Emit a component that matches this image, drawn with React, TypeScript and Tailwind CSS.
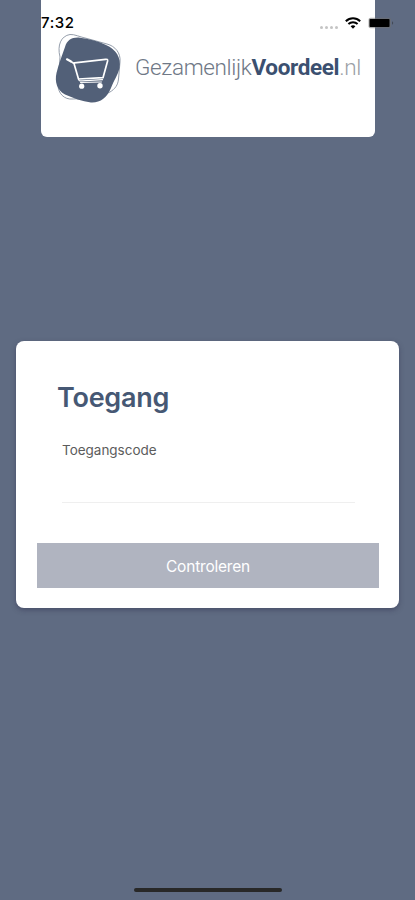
import { useState } from "react";

function StatusBar() {
    return (
        <div className="absolute inset-x-0 top-0 z-10 flex h-11 items-start justify-between pl-[41px] pr-[21px] pt-[14px] text-black">
            <span className="font-['Inter'] text-[15px] font-medium leading-[18px] tracking-[0.6px]">7:32</span>
            <div className="flex items-center pt-[3px]">
                <div className="mr-[7px] mt-[8px] flex gap-[2px]">
                    <span className="size-[3px] rounded-full bg-[#c4c4c4]" />
                    <span className="size-[3px] rounded-full bg-[#c4c4c4]" />
                    <span className="size-[3px] rounded-full bg-[#c4c4c4]" />
                    <span className="size-[3px] rounded-full bg-[#c4c4c4]" />
                </div>
                <svg width="16" height="12" viewBox="0 0 16 12" fill="none" stroke="currentColor" strokeWidth="2">
                    <path d="M0.8 4.2C5 0.2 11 0.2 15.2 4.2" />
                    <path d="M3.4 7.1C6 4.7 10 4.7 12.6 7.1" />
                    <path d="M5.6 9.2C7 8 9 8 10.4 9.2L8 11.7Z" fill="currentColor" stroke="none" />
                </svg>
                <svg className="ml-[7px]" width="26" height="12" viewBox="0 0 26 12">
                    <rect x="0.5" y="0.7" width="22.5" height="10.6" rx="2" fill="#707070" fillOpacity="0.55" />
                    <rect x="1.5" y="2" width="20" height="8" rx="0.8" fill="#000" />
                    <path d="M24 4.2C25.6 4.8 25.6 7.2 24 7.8Z" fill="#444b58" />
                </svg>
            </div>
        </div>
    );
}

function CartLogo() {
    return (
        <svg className="shrink-0" width="70" height="72" viewBox="0 0 70 72" fill="none">
            <path
                d="M7 24C4 12 8 3 17 1.5C21 1 27 4 34 5.5L54 11C62 13 68 20 67 29L65.5 46C65 52 62 56 57 59L42 66C35 68 29 65 20 66C11 67 5 60 5 52Z"
                stroke="#8993a1"
                strokeWidth="0.9"
            />
            <path
                d="M12 14C14 7 19 4 27 4.7C35 5.5 45 8 53 12C63 16 68.5 25 66.5 35C65 42 61 47 58 55C54 65 47 70 38 69.5C29 68.5 20 65 12 61.5C4 57 1.5 49 3.5 40C5.5 31 9 23 12 14Z"
                fill="#526078"
            />
            <g stroke="#fff" strokeLinecap="round" strokeLinejoin="round">
                <path d="M14 26.3L17.6 28.3" strokeWidth="2.2" />
                <path d="M17.6 28.3L21 30.5L25.5 46L50 44.7L54.6 28C54.9 26.5 54 26.1 52.5 26.3L21.5 29.8" strokeWidth="1.7" />
                <path d="M25.5 46C25.8 48 27 48.2 29 47.8L49.5 46.7" strokeWidth="1.2" />
                <path d="M27.5 49.5L48.5 49" strokeWidth="1" />
            </g>
            <circle cx="28.7" cy="53.2" r="2.6" fill="#fff" />
            <circle cx="47" cy="52.7" r="2.7" fill="#fff" />
        </svg>
    );
}

export default function App() {
    const [code, setCode] = useState<string>("");

    return (
        <main className="relative flex h-[900px] w-[415px] flex-col overflow-hidden bg-[#5f6b82] font-['Inter',sans-serif]">
            <StatusBar />

            <header className="ml-[41px] h-[137px] w-[334px] rounded-b-md bg-white pl-3 pt-[33px]">
                <div className="flex items-center">
                    <CartLogo />
                    <p className="ml-3 mt-[-4px] whitespace-nowrap font-['Roboto'] text-[22.5px] font-light leading-7 tracking-[-0.35px] text-[#6f7886]">
                        Gezamenlijk
                        <span className="font-bold text-[#3b5070]">Voordeel</span>
                        <span className="text-[#9b9fa6]">.nl</span>
                    </p>
                </div>
            </header>

            <form
                onSubmit={(e) => e.preventDefault()}
                className="ml-4 mt-[204px] flex h-[267px] w-[383px] flex-col rounded-lg bg-white px-[21px] shadow-[0_2px_5px_rgba(50,50,80,0.5)]"
            >
                <h1 className="ml-5 mt-10 text-[27px] font-semibold leading-[34px] tracking-[-0.25px] text-[#465874]">Toegang</h1>
                <label htmlFor="code" className="ml-[25px] mt-[25px] text-[13.5px] leading-5 tracking-[-0.02px] text-[#5c5c5c]">
                    Toegangscode
                </label>
                <input
                    id="code"
                    value={code}
                    onChange={(e) => setCode(e.target.value)}
                    className="ml-[25px] h-[43px] w-[293px] border-b border-[#efefef] outline-none"
                />
                <button type="submit" className="mt-10 h-[45px] w-[342px] bg-[#b0b4c0] pt-0.5 text-[15.5px] tracking-[-0.2px] text-white">
                    Controleren
                </button>
            </form>

            <div className="mb-2 mt-auto h-1 w-[148px] self-center rounded-full bg-[#282828]" />
        </main>
    );
}
